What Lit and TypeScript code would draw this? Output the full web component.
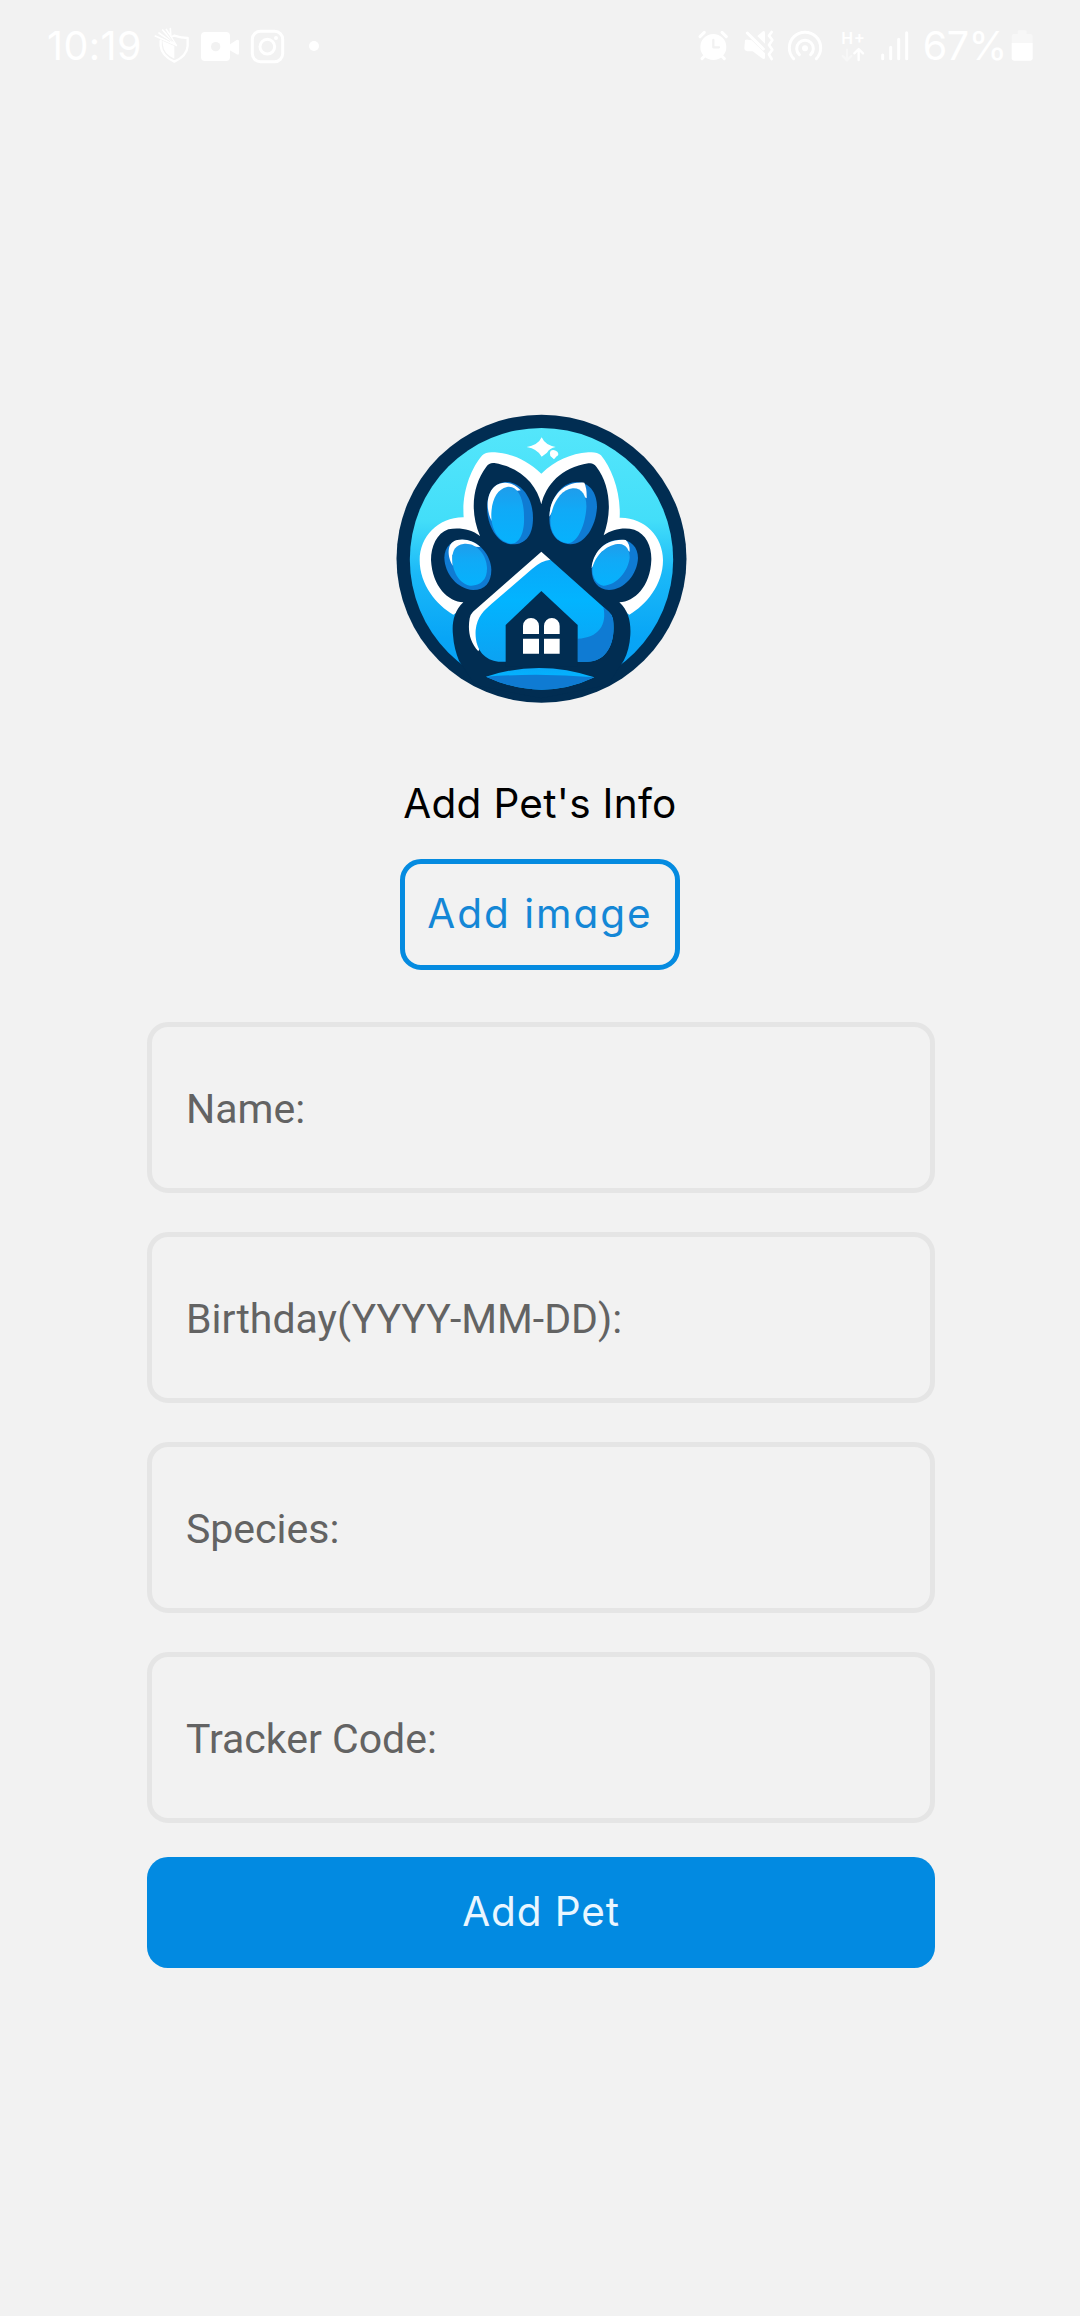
import { LitElement, html, svg, css } from "lit";
import { customElement } from "lit/decorators.js";

@customElement("status-bar")
class StatusBar extends LitElement {
  static styles = css`
    :host { display: block; color: #fff; }
    .bar { display: flex; justify-content: space-between; height: 85px; padding: 10px 43.3px 0 47px; box-sizing: border-box; }
    .group { display: flex; }
    .text { font: 400 39.5px/73px Inter, Roboto, sans-serif; white-space: nowrap; }
    .time { width: 106.3px; letter-spacing: 0.4px; }
    .level { width: 86.7px; letter-spacing: -0.5px; text-indent: 1px; }
    svg { display: block; height: 75px; flex: none; }
    .fill { fill: #fff; }
    .cut { fill: #f2f2f2; }
    .line { fill: none; stroke: #fff; stroke-linecap: round; stroke-linejoin: round; }
    .cutline { fill: none; stroke: #f2f2f2; stroke-linecap: round; stroke-linejoin: round; }
    .dim { opacity: 0.4; }
    .net { font: 500 50px Roboto, sans-serif; fill: #fff; }
  `;

  private icon(x: number, w: number, body: unknown) {
    return html`<svg width=${w / 3} viewBox="${x} 0 ${w} 225">${body}</svg>`;
  }

  render() {
    return html`<div class="bar">
      <div class="group">
        <span class="text time">10:19</span>
        ${this.icon(370, 125, svg`
          <path class="line" stroke-width="7" d="M434 77 Q454 84 474 84 V108 Q472 138 434 155 Q396 138 393 108 V92"/>
          <path class="line" stroke-width="6" d="M434 77 L420 82"/>
          <path class="fill" d="M434 108 V146 Q402 132 400 106 L398 92 L434 108Z"/>
          <path class="line" stroke-width="5" d="M377 78 L440 106 M388 69 L440 106 M399 60 L440 106 M410 58 L440 106 M422 56 L424 88"/>
          <path class="cutline" stroke-width="3" d="M392 78 L420 94 M403 73 L426 93 M413 70 L430 94"/>`)}
        ${this.icon(495, 150, svg`
          <rect class="fill" x="513" y="66" width="87" height="87" rx="12"/>
          <path class="fill" d="M598 104 L620 90 Q627 87 627 94 V130 Q627 137 620 133 L598 120Z"/>
          <circle class="cut" cx="557" cy="110" r="14"/>`)}
        ${this.icon(645, 135, svg`
          <rect class="line" stroke-width="9" x="667" y="64" width="91" height="91" rx="24"/>
          <circle class="line" stroke-width="9" cx="712" cy="110" r="22"/>
          <circle class="fill" cx="738" cy="84" r="6"/>`)}
        ${this.icon(780, 120, svg`<circle class="fill" cx="852" cy="108" r="15"/>`)}
      </div>
      <div class="group">
        ${this.icon(40, 125, svg`
          <circle class="fill" cx="101" cy="111" r="39"/>
          <path class="line" stroke-width="9" d="M61 80 L74 67 M127 67 L140 80 M75 138 L67 146 M126 138 L134 146"/>
          <path class="cutline" stroke-width="7" d="M101 90 V112 H118"/>`)}
        ${this.icon(165, 135, svg`
          <path class="fill" d="M195 91 Q197 88 204 89 L215 91 L255 130 V143 Q254 150 246 145 L218 124 H202 Q193 122 193 114Z"/>
          <path class="fill" d="M232 78 L247 65 Q255 60 255 70 V101Z"/>
          <path class="line" stroke-width="9" d="M202 69 L250 117"/>
          <path class="line" stroke-width="8" d="M275 66 L267 77 L277 90 L267 105 L277 119 L267 133 L275 147"/>`)}
        ${this.icon(300, 150, svg`
          <circle class="fill" cx="375" cy="115" r="9"/>
          <path class="line" stroke-width="9" d="M341 146 A47 47 0 1 1 409 146"/>
          <path class="line" stroke-width="9" d="M358 134 A25 25 0 1 1 392 134"/>`)}
        ${this.icon(450, 130, svg`
          <text class="net" x="484" y="102" textLength="68">H+</text>
          <path class="line dim" stroke-width="7" d="M501 119 V149 M488 138 L501 151 L514 138"/>
          <path class="line" stroke-width="7" d="M536 150 V118 M523 130 L536 117 L549 130"/>`)}
        ${this.icon(580, 145, svg`
          <path class="line" stroke-width="9" d="M609 135 V146 M633 112 V146 M657 88 V146 M681 68 V146"/>`)}
        <span class="text level">67%</span>
        ${this.icon(985, 85, svg`
          <path class="fill dim" d="M996 100 V80 Q996 72 1003 72 H1014 V65 Q1014 61 1018 61 H1037 Q1041 61 1041 65 V72 H1052 Q1059 72 1059 80 V100Z"/>
          <path class="fill" d="M996 99 H1059 V145 Q1059 152 1052 152 H1003 Q996 152 996 145Z"/>`)}
      </div>
    </div>`;
  }
}

@customElement("paw-logo")
class PawLogo extends LitElement {
  static styles = css`
    :host { display: block; }
    svg { display: block; width: 310px; height: 310px; }
    .navy { fill: #012d52; }
    .white { fill: #fff; }
    .deep { fill: #0f7bd3; }
    .light { fill: url(#azure); }
    .toe { fill: url(#toe); }
    .sky { fill: url(#sky); }
  `;

  render() {
    return html`<svg viewBox="0 0 930 930">
      <defs>
        <linearGradient id="sky" x1="0" y1="0" x2="0" y2="1">
          <stop offset="0" stop-color="#54e6fb"/>
          <stop offset="0.35" stop-color="#43def9"/>
          <stop offset="0.55" stop-color="#1bb9f8"/>
          <stop offset="0.8" stop-color="#08a5f6"/>
          <stop offset="1" stop-color="#08a0f4"/>
        </linearGradient>
        <linearGradient id="azure" x1="0" y1="0" x2="0" y2="1">
          <stop offset="0" stop-color="#0aa8f8"/>
          <stop offset="0.4" stop-color="#02b4ff"/>
          <stop offset="1" stop-color="#0ca2f2"/>
        </linearGradient>
        <linearGradient id="toe" x1="0" y1="0" x2="0" y2="1">
          <stop offset="0" stop-color="#1f9deb"/>
          <stop offset="0.4" stop-color="#10aaf7"/>
          <stop offset="1" stop-color="#06b2fd"/>
        </linearGradient>
      </defs>
      <ellipse class="navy" cx="469.500" cy="461" rx="435" ry="432"/>
      <ellipse class="sky" cx="469.500" cy="464" rx="395" ry="395"/>
      <path class="white" d="M469 206 C425 165 385 147 330 142 Q303 139 292 151 C258 190 230 262 236 337 C160 336 104 395 104 465 C104 540 155 600 205 629 L260 592 H680 L733 629 C783 600 834 540 834 465 C834 395 778 336 704 338 C708 262 680 190 648 151 Q635 139 610 142 C555 147 513 165 469 206Z"/>
      <path class="navy" d="M469 298 C455 240 410 188 328 174 Q313 172 304 185 C262 240 254 320 285 393 C258 372 222 367 190 373 C155 385 138 425 138 465 C142 545 190 590 235 592 C207 618 200 655 204 690 C206 720 213 745 222 767 L270 840 L469 880 L668 840 L716 767 C728 745 734 720 736 690 C738 655 732 618 703 592 C748 590 796 545 799 465 C800 425 785 388 748 374 C718 366 682 372 656 391 C682 320 676 240 634 185 Q625 172 610 175 C528 188 483 240 469 298Z"/>

      <path class="deep" d="M365 231 C409 232 444 280 444 338 C444 388 424 418 382 418 C336 418 305 360 306 303 C308 258 332 231 365 231Z"/>
      <path class="white" d="M320 348 C303 315 303 270 327 246 C350 227 382 229 407 256 L365 262 L325 300Z"/>
      <path class="toe" d="M366 246 C400 240 417 285 417 335 C419 380 405 416 378 416 C338 410 317 370 319 325 C321 283 337 252 366 246Z"/>

      <path class="deep" d="M576 231 C611 232 635 260 636 305 C634 360 602 418 556 418 C514 415 493 386 493 340 C494 282 529 231 576 231Z"/>
      <path class="white" d="M493 335 C494 282 530 228 598 233 Q606 250 605 280 L570 262 L520 290Z"/>
      <path class="toe" d="M563 250 C592 248 606 275 604 310 C600 365 575 416 548 415 C514 412 496 382 496 345 C500 300 525 254 563 250Z"/>

      <path class="deep" d="M235 404 C280 404 318 450 319 494 C319 532 300 555 264 555 C217 552 179 506 178 458 C178 424 202 404 235 404Z"/>
      <path class="white" d="M203 482 C187 455 184 416 213 406 C240 399 266 408 286 426 L240 424 L202 450Z"/>
      <path class="toe" d="M235 417 C273 412 304 447 306 490 C307 527 282 544 255 542 C222 535 201 498 202 458 C203 434 213 420 235 417Z"/>

      <path class="deep" d="M702 404 C738 403 759 426 759 459 C757 508 719 554 672 555 C639 554 620 529 620 495 C622 448 656 405 702 404Z"/>
      <path class="white" d="M620 490 C623 445 658 399 722 405 Q735 416 734 440 L700 420 L650 440Z"/>
      <path class="toe" d="M698 417 C723 414 735 436 734 458 C730 496 697 540 655 542 C634 539 622 518 622 493 C628 454 662 421 698 417Z"/>

      <path class="white" d="M469 440 L496 464 L330 640 L280 739 C253 710 248 675 254 640 Q256 628 264 620Z"/>
      <path class="light" d="M496 464 L671 620 Q681 628 684 642 C694 720 660 772 604 770 H340 C300 766 268 735 272 675 C276 635 298 615 320 596 L441 492 Q468 467 496 464Z"/>
      <path class="deep" d="M655 606 L671 620 Q681 628 684 642 C694 720 660 772 604 770 H578 V701 C640 699 667 660 655 606Z"/>
      <path class="navy" d="M362 785 V660 L469 558 L578 660 V785Z"/>
      <path class="white" d="M414 687 V663 A24 24 0 0 1 462 663 V687Z M477 687 V663 A23.500 24 0 0 1 524 663 V687Z M414 701 H462 V746 H414Z M477 701 H524 V746 H477Z"/>
      <path class="light" d="M303 815 Q465 762 628 817 Q470 892 303 815Z"/>
      <path class="deep" d="M303 815 Q465 803 628 817 Q470 892 303 815Z"/>

      <path class="white" d="M470 97 Q480 120 512 126 Q494 129 486 143 L470 155 Q458 132 425 126 Q460 120 470 97Z"/>
      <path class="white" d="M497 137 Q507 132 517 140 Q524 149 515 154 L507 163 L496 153 Q492 145 497 137Z"/>
    </svg>`;
  }
}

@customElement("app-root")
class AppRoot extends LitElement {
  static styles = css`
    :host { display: block; }
    * { box-sizing: border-box; }
    .page { height: 2316px; background: #f2f2f2; display: flex; flex-direction: column; }
    .content { display: flex; flex-direction: column; align-items: center; padding: 320px 145px 0; }
    .geo { font-family: Inter, "Open Sans", sans-serif; font-weight: 400; font-size: 40.5px; font-feature-settings: "cv11"; white-space: nowrap; }
    .title { margin: 59px 0 0; line-height: 60px; color: #000; letter-spacing: 0.3px; }
    .btn { border: 0; height: 111px; border-radius: 21px; display: block; padding: 0 0 3px; }
    .outline { margin-top: 25px; width: 280px; border: 5px solid #058be0; background: none; color: #1487d6; letter-spacing: 2px; }
    .form { width: 788px; padding-top: 52px; margin-left: 2px; }
    .fields { display: grid; gap: 39px; }
    .field { display: flex; align-items: center; height: 171px; border: 5px solid #e5e5e5; border-radius: 21px; padding: 2px 34px 0; font: 400 41px/48px Roboto, sans-serif; color: #636363; }
    .solid { margin-top: 34px; width: 100%; background: #028ae1; color: #e9f6ff; letter-spacing: 0.9px; }
  `;

  private fields = ["Name:", "Birthday(YYYY-MM-DD):", "Species:", "Tracker Code:"];

  render() {
    return html`<main class="page">
      <status-bar></status-bar>
      <div class="content">
        <paw-logo></paw-logo>
        <h1 class="title geo">Add Pet's Info</h1>
        <button class="btn outline geo">Add image</button>
        <div class="form">
          <div class="fields">
            ${this.fields.map((f) => html`<label class="field">${f}</label>`)}
          </div>
          <button class="btn solid geo">Add Pet</button>
        </div>
      </div>
    </main>`;
  }
}
